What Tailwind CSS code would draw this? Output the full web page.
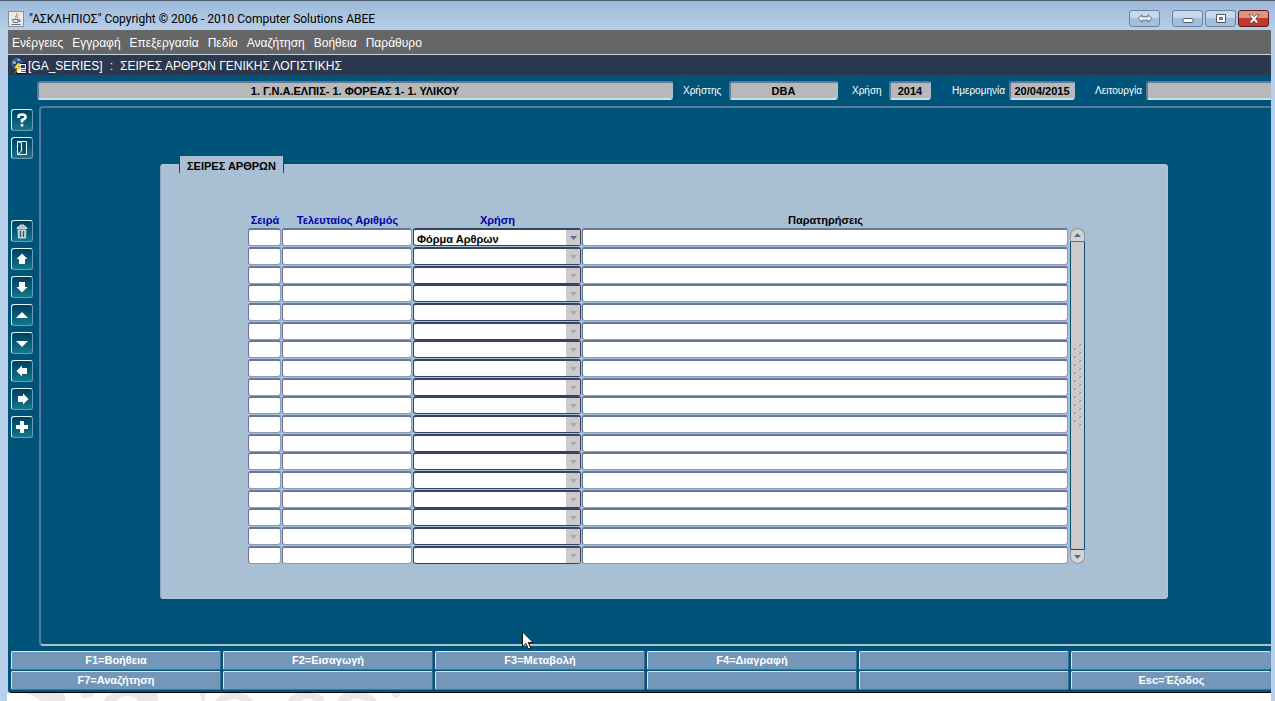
<!DOCTYPE html>
<html lang="el">
<head>
    <meta charset="UTF-8">
    <meta name="viewport" content="width=device-width, initial-scale=1.0">
    <title>"ΑΣΚΛΗΠΙΟΣ"</title>
    <script src="https://cdn.jsdelivr.net/npm/@tailwindcss/browser@4"></script>
</head>
<body class="h-screen overflow-hidden flex flex-col bg-[#b9d0ea] font-['Liberation_Sans',sans-serif] text-[11px] text-black border-t border-[#50606e]">
    <!-- Title bar -->
    <header class="h-[29px] shrink-0 flex items-center pl-2 pr-1.5 pt-1.5 gap-1 bg-linear-to-b from-[#9db9da] to-[#b7cfe9]">
        <svg class="w-4 h-4" viewBox="0 0 16 16">
            <rect x=".5" y=".5" width="15" height="15" fill="#eceae6" stroke="#8a8f96"/>
            <path d="M8.500 2c1.500 2-2 3-.5 5.500M10.500 4c-1.500 1-1.500 2-.5 3" fill="none" stroke="#e0702a"/>
            <path d="M4.500 8.500h6l-.8 3h-4.400zM10.500 9h1.500v1.500h-1.500M3.500 13.500h9" fill="none" stroke="#5a6f96"/>
        </svg>
        <h1 class="flex-1 pl-px text-xs font-['Roboto','Open_Sans',sans-serif]">"ΑΣΚΛΗΠΙΟΣ" Copyright © 2006 - 2010 Computer Solutions ΑΒΕΕ</h1>
        <div class="flex gap-0.5">
            <button aria-label="Resize" class="w-[31px] h-[17px] mr-2.5 rounded-[3px] border border-[#6d839d] bg-linear-to-b from-[#c5d8ec] from-50% to-[#a5bfdb] to-50% flex items-center justify-center">
                <svg class="w-4 h-[9px]" viewBox="0 0 16 9"><path d="M1 4.500 5 .8v2h6v-2l4 3.700-4 3.700v-2H5v2z" fill="#f4f7fa" stroke="#5d6a78"/></svg>
            </button>
            <button aria-label="Minimize" class="w-[31px] h-[17px] rounded-[3px] border border-[#6d839d] bg-linear-to-b from-[#c5d8ec] from-50% to-[#a5bfdb] to-50% flex items-center justify-center">
                <svg class="w-3 h-[11px]" viewBox="0 0 12 11"><rect x="1" y="5.500" width="10" height="4" rx="1" fill="#fff" stroke="#4d5966"/></svg>
            </button>
            <button aria-label="Maximize" class="w-[31px] h-[17px] rounded-[3px] border border-[#6d839d] bg-linear-to-b from-[#c5d8ec] from-50% to-[#a5bfdb] to-50% flex items-center justify-center">
                <svg class="w-3 h-[10px]" viewBox="0 0 12 10"><path d="M1.500.5h9v8h-9zM4.500 3.500h3v2h-3z" fill="#fff" fill-rule="evenodd" stroke="#4d5966"/></svg>
            </button>
            <button aria-label="Close" class="w-[31px] h-[17px] rounded-[3px] border border-[#5c1a20] bg-linear-to-b from-[#dc9486] from-50% to-[#c0392b] to-50% flex items-center justify-center">
                <svg class="w-3 h-[10px]" viewBox="0 0 12 10"><path d="M1 .8h3l2 2 2-2h3L7.800 4.800 11 9H8L6 6.800 4 9H1l3.200-4.200z" fill="#fff" stroke="#5a4046" stroke-width=".8"/></svg>
            </button>
        </div>
    </header>

    <div class="flex-1 min-h-0 flex flex-col ml-2 mr-1">
        <nav class="h-[25px] shrink-0 flex items-center gap-[9px] pl-1 pt-0.5 bg-[#666] border-b border-[#c8d4dc] text-xs text-white">
            <a href="#">Ενέργειες</a>
            <a href="#">Εγγραφή</a>
            <a href="#">Επεξεργασία</a>
            <a href="#">Πεδίο</a>
            <a href="#">Αναζήτηση</a>
            <a href="#">Βοήθεια</a>
            <a href="#">Παράθυρο</a>
        </nav>
        <div class="h-5 shrink-0 flex items-center pt-0.5 pl-[3px] gap-px bg-[#2b384d] text-xs text-white">
            <svg class="w-4 h-4" viewBox="0 0 16 16">
                <circle cx="6" cy="5.500" r="5" fill="#1d3f9e" stroke="#8fa4d8" stroke-width=".6"/>
                <path d="M2 3h3v3H2zM6 1h3v2H6z" fill="#6cc46c"/>
                <path d="M5.500 5.500h10v10h-10z" fill="#fff" stroke="#111"/>
                <path d="M10 7h4v3h-4z" fill="#2430c0"/><path d="M10 11.500h5M10 13.500h5" stroke="#d03030"/>
                <path d="M6.500 5 3 10.500h3L3.500 15.500l6.500-7H7L9.500 5z" fill="#ffe83a" stroke="#6a5a00" stroke-width=".5"/>
            </svg>
            <span>[GA_SERIES]</span>
            <span class="px-1.5">:</span>
            <span>ΣΕΙΡΕΣ ΑΡΘΡΩΝ ΓΕΝΙΚΗΣ ΛΟΓΙΣΤΙΚΗΣ</span>
        </div>

        <div class="flex-1 min-h-0 flex flex-col bg-[#005378] rounded-bl-sm border-b border-black">
            <!-- Session info -->
            <div class="flex items-center pl-[29px] py-1.5 text-[10px] text-white">
                <input aria-label="Φορέας" readonly value="1. Γ.Ν.Α.ΕΛΠΙΣ- 1. ΦΟΡΕΑΣ 1- 1. ΥΛΙΚΟΥ" class="flex-1 min-w-0 h-[19px] rounded-[3px] border-2 border-[#5f7a9c] border-r-[#a9bfd2] border-b-[#c3e2ee] bg-[#b8b8b8] text-center text-[11px] font-bold text-black">
                <label for="user" class="w-14 pl-2.5">Χρήστης</label>
                <input id="user" readonly value="DBA" class="w-[109px] h-[19px] rounded-[3px] border-2 border-[#5f7a9c] border-r-[#a9bfd2] border-b-[#c3e2ee] bg-[#b8b8b8] text-center text-[11px] font-bold text-black">
                <label for="year" class="w-[51px] pl-3.5">Χρήση</label>
                <input id="year" readonly value="2014" class="w-[42px] h-[19px] rounded-[3px] border-2 border-[#5f7a9c] border-r-[#a9bfd2] border-b-[#c3e2ee] bg-[#b8b8b8] text-center text-[11px] font-bold text-black">
                <label for="date" class="w-[78px] pr-1 text-right">Ημερομηνία</label>
                <input id="date" readonly value="20/04/2015" class="w-[66px] h-[19px] rounded-[3px] border-2 border-[#5f7a9c] border-r-[#a9bfd2] border-b-[#c3e2ee] bg-[#b8b8b8] text-center text-[11px] font-bold text-black">
                <label for="mode" class="w-[71px] pr-1 text-right">Λειτουργία</label>
                <input id="mode" readonly class="w-[125px] h-[19px] rounded-l-[3px] border-2 border-r-0 border-[#5f7a9c] border-b-[#c3e2ee] bg-[#b8b8b8] text-center text-[11px] font-bold text-black">
            </div>

            <div class="flex-1 min-h-0 flex">
                <!-- Toolbar -->
                <div id="toolbar" class="w-[31px] shrink-0 flex flex-col gap-1.5 pl-[3px] pt-[3px]"></div>

                <main class="flex-1 min-w-0 border-2 border-r-0 border-[#56789a] border-b-[#aebfcb] rounded-l-sm pt-[48px] pl-[119px] pr-[103px]">
                    <fieldset class="bg-[#a9bfd4] rounded-sm border border-[#b4c4d2] border-l-[#8ba6c0] h-[443px] pl-[87px] pr-[82px]">
                        <legend class="-ml-[69px] h-[17px] px-[7px] border-x border-[#005378] bg-[#a9bfd4] font-bold leading-[20px]">ΣΕΙΡΕΣ ΑΡΘΡΩΝ</legend>
                        <div class="flex pt-[38px]">
                            <table class="flex-1 table-fixed">
                                <colgroup><col class="w-[34px]"><col class="w-[131px]"><col class="w-[169px]"><col></colgroup>
                                <thead>
                                    <tr class="leading-[15px] text-[#0000a8]">
                                        <th class="pt-0.5">Σειρά</th>
                                        <th class="pt-0.5">Τελευταίος Αριθμός</th>
                                        <th class="pt-0.5">Χρήση</th>
                                        <th class="pt-0.5 text-black">Παρατηρήσεις</th>
                                    </tr>
                                </thead>
                                <tbody id="rows"></tbody>
                            </table>
                            <!-- Vertical scrollbar -->
                            <div class="w-[15px] mt-[17px] ml-px flex flex-col text-[#5c6f8c]">
                                <button aria-label="Πάνω" class="h-[14px] rounded-t-full border border-[#8f969c] border-b-[#5c6f8c] bg-[#d4d4d4] flex items-center justify-center">
                                    <svg class="w-[7px] h-1" viewBox="0 0 7 4"><path d="M3.500 0 7 4H0z" fill="currentColor"/></svg>
                                </button>
                                <div class="flex-1 border-x border-[#0b4c70] bg-[#cbcbcb] flex items-start justify-center pt-[102px]">
                                    <svg class="w-2 h-[84px]">
                                        <defs><pattern id="grip" width="10" height="8" patternUnits="userSpaceOnUse"><path d="M0 6 2 4M5 2 7 0" stroke="#808080"/></pattern></defs>
                                        <rect width="8" height="84" fill="url(#grip)"/>
                                    </svg>
                                </div>
                                <button aria-label="Κάτω" class="h-[15px] rounded-b-full border border-[#8f969c] border-t-[#0b4c70] bg-[#d4d4d4] flex items-center justify-center">
                                    <svg class="w-[7px] h-1" viewBox="0 0 7 4"><path d="M0 0h7L3.500 4z" fill="currentColor"/></svg>
                                </button>
                            </div>
                        </div>
                    </fieldset>
                </main>
            </div>

            <!-- Function keys -->
            <div id="keys" class="grid grid-cols-[repeat(5,210fr)_200fr] gap-x-0.5 gap-y-px pl-[3px] pt-[5px] pb-0.5"></div>
        </div>

        <!-- Strip of the desktop behind the window -->
        <div class="h-2 shrink-0 -ml-px bg-white overflow-hidden">
            <svg class="w-[425px] h-2" viewBox="0 0 425 8" fill="#e9e9e9">
                <path d="M18 0h38q4 4 2 8H34Q28 3 18 0zM74 0h14q-4 5-10 5T74 0zM97 8q2-6 10-8h44v8h-20q-4-5-11-5t-10 5zM193 0h5v8h-3zM208 8q4-6 12-8h14q9 2 12 8h-12q-6-5-14 0zM281 8q2-6 10-8h18q7 2 9 8h-10q-8-5-14 0zM330 8q2-6 10-8h18q9 2 12 8h-12q-8-5-16 0zM384 0h10q-2 5-5 5t-5-5z"/>
            </svg>
        </div>
    </div>

    <svg class="absolute left-[522px] top-[631px] w-3 h-[19px]" viewBox="0 0 12 19">
        <path d="M.5.8v15l3.400-3.300 2.400 5.500 2.400-1-2.400-5.400h4.900z" fill="#fff" stroke="#111"/>
    </svg>

    <script>
        const tools = [
            ["Βοήθεια", '<path d="M4.500 6V4.500Q4.500 2.500 8 2.500T11.500 5Q11.500 7 8 8v2.500M8 12v2.500" fill="none" stroke="#fff" stroke-width="2.600"/>'],
            ["Έξοδος", '<path d="M3.500 1.500h9v13h-9z" fill="none" stroke="#fff"/><path d="M3.500 1.500 7.500 3v8l-4 3.500z" fill="#174a66" stroke="#fff"/><path d="M9 3h2v10H9z" fill="#0a4a60"/>'],
            ["Διαγραφή", '<path d="M3 5.500Q3 3.500 6 3.500V2h4v1.500q3 0 3 2zM4 7h8l-.5 8h-7z" fill="#aebfc4" stroke="#e8f0f2" stroke-width=".8"/><path d="M6.500 8v6M9.500 8v6" stroke="#2d5867"/>'],
            ["Προηγούμενη εγγραφή", '<path d="M8 2.500 13.500 8H11v5H5V8H2.500z" fill="#fff"/>'],
            ["Επόμενη εγγραφή", '<path d="M8 13.500 2.500 8H5V3h6v5h2.500z" fill="#fff"/>'],
            ["Πάνω", '<path d="M8 5 14 11H2z" fill="#fff"/>'],
            ["Κάτω", '<path d="M8 12 2 6h12z" fill="#fff"/>'],
            ["Αριστερά", '<path d="M2.500 8 8 2.500V5h5v6H8v2.500z" fill="#fff"/>'],
            ["Δεξιά", '<path d="M14.500 8 9 2.500V5H4v6h5v2.500z" fill="#fff"/>'],
            ["Εισαγωγή", '<path d="M6 2h4v4h4v4h-4v4H6v-4H2V6h4z" fill="#fff"/>']
        ];
        document.getElementById("toolbar").innerHTML = tools.map(([name, icon], i) => `
            <button aria-label="${name}" class="w-[22px] h-[22px] shrink-0 rounded-[3px] border border-[#e2f4f8] border-r-[#6d9ab4] border-b-[#6d9ab4] bg-linear-to-b from-[#003f5e] to-[#14788a] flex items-center justify-center ${i === 2 ? "mt-[55px]" : ""}">
                <svg class="w-4 h-4" viewBox="0 0 16 16">${icon}</svg>
            </button>`).join("");

        const field = "block w-full h-[18px] rounded-[3px] border border-t-2 border-[#66779a] border-r-[#8c9bb4] border-b-[#8c9bb4] bg-white px-1";
        let rows = "";
        for (let i = 0; i < 18; i++) {
            // every third row closes up by a pixel
            const cell = i % 3 === 2 ? "pr-px" : "pr-px pb-px";
            rows += `
            <tr>
                <td class="${cell}"><input aria-label="Σειρά" class="${field}"></td>
                <td class="${cell}"><input aria-label="Τελευταίος Αριθμός" class="${field}"></td>
                <td class="${cell}">
                    <div class="relative">
                        <select aria-label="Χρήση" class="block w-full h-[18px] appearance-none rounded-[3px] border border-t-2 border-[#35445e] bg-white pl-[3px] pt-px font-bold">
                            <option>${i === 0 ? "Φόρμα Αρθρων" : ""}</option>
                        </select>
                        <span class="absolute right-px top-0.5 bottom-px w-[14px] bg-[#cbcbcb] flex items-center justify-center pointer-events-none ${i === 0 ? "text-[#5c6f8c]" : "text-[#a8a8a8]"}">
                            <svg class="w-[7px] h-1" viewBox="0 0 7 4"><path d="M0 0h7L3.500 4z" fill="currentColor"/></svg>
                        </span>
                    </div>
                </td>
                <td class="${cell}"><input aria-label="Παρατηρήσεις" class="${field}"></td>
            </tr>`;
        }
        document.getElementById("rows").innerHTML = rows;

        const keys = ["F1=Βοήθεια", "F2=Εισαγωγή", "F3=Μεταβολή", "F4=Διαγραφή", "", "", "F7=Αναζήτηση", "", "", "", "", "Esc=Έξοδος"];
        document.getElementById("keys").innerHTML = keys.map((key, i) => `
            <button aria-label="${key || "Κενό"}" class="h-[19px] rounded-xs border border-[#cdeef4] border-b-[#45709a] bg-[#7397b9] font-bold text-white ${i % 6 === 5 ? "border-r-0" : "border-r-[#45709a]"}">${key}</button>`).join("");
    </script>
</body>
</html>
